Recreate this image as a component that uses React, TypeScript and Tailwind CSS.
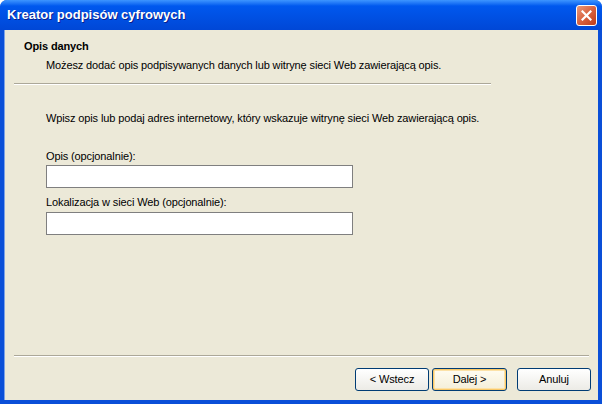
export default function App() {
  const font = { fontFamily: '"Liberation Sans", Arial, sans-serif' }
  return (
    <div
      className="flex h-[404px] w-[602px] flex-col overflow-hidden rounded-t-[7px] bg-[#0A4FD8]"
      style={font}
    >
      {/* title bar */}
      <div className="flex h-[30px] shrink-0 items-center justify-between bg-gradient-to-b from-[#3D95FF] via-[#0058EE] via-[20%] to-[#0047D6] pl-[7px] pr-[5px]">
        <span className="text-[13px] font-bold text-white [text-shadow:1px_1px_0_#0A1E8C]">
          Kreator podpisów cyfrowych
        </span>
        <div className="flex h-[21px] w-[21px] items-center justify-center rounded-[3px] border border-white bg-gradient-to-br from-[#E8987A] via-[#D9623F] to-[#BE3A16]">
          <svg width="11" height="11" viewBox="0 0 11 11">
            <path d="M1.5 1.5 L9.5 9.5 M9.5 1.5 L1.5 9.5" stroke="white" strokeWidth="2.2" strokeLinecap="square" />
          </svg>
        </div>
      </div>

      {/* client area */}
      <div className="mx-[4px] mb-[4px] flex flex-1 flex-col border-l border-[#7BA2E7] bg-[#ECE9D8] text-[11px] leading-[13px] tracking-[-0.12px] text-black">
        <div className="pl-[19px] pt-[10px] font-bold">Opis danych</div>
        <div className="pl-[41px] pt-[6px]">
          Możesz dodać opis podpisywanych danych lub witrynę sieci Web zawierającą opis.
        </div>
        <div className="ml-[9px] mt-[11px] w-[477px] border-t border-b border-t-[#ACA899] border-b-white" />

        <div className="pl-[41px] pt-[27px]">
          Wpisz opis lub podaj adres internetowy, który wskazuje witrynę sieci Web zawierającą opis.
        </div>

        <div className="pl-[41px] pt-[25px]">Opis (opcjonalnie):</div>
        <div className="ml-[41px] mt-[2px] h-[23px] w-[307px] border border-[#7F7F7F] bg-white" />

        <div className="pl-[41px] pt-[8px]">Lokalizacja w sieci Web (opcjonalnie):</div>
        <div className="ml-[41px] mt-[3px] h-[23px] w-[307px] border border-[#7F7F7F] bg-white" />

        <div className="flex-1" />
        <div className="ml-[9px] w-[575px] border-t border-b border-t-[#ACA899] border-b-white" />

        <div className="flex items-center justify-end gap-[3px] pb-[9px] pr-[7px] pt-[11px]">
          <button className="h-[23px] w-[74px] rounded-[3px] border border-[#003C74] bg-gradient-to-b from-white to-[#ECEBE6] text-[11px] text-black">
            &lt; Wstecz
          </button>
          <button className="h-[23px] w-[75px] rounded-[3px] border border-[#003C74] bg-gradient-to-b from-[#FFFDF2] to-[#F4EED8] text-[11px] text-black shadow-[inset_0_0_0_1px_#F9C867,inset_0_0_0_2px_#FCE2A8]">
            Dalej &gt;
          </button>
          <button className="ml-[7px] h-[23px] w-[74px] rounded-[3px] border border-[#003C74] bg-gradient-to-b from-white to-[#ECEBE6] text-[11px] text-black">
            Anuluj
          </button>
        </div>
      </div>
    </div>
  )
}
